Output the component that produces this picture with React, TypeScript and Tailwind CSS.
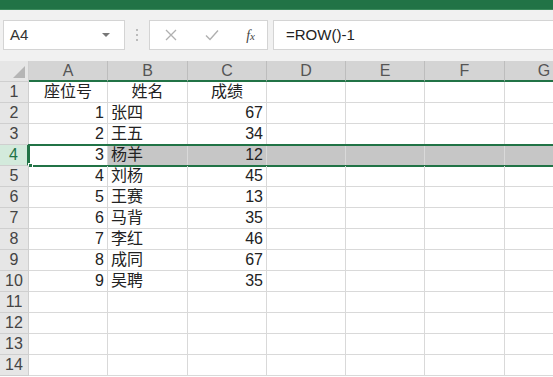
import React from "react";

const cols = ["A", "B", "C", "D", "E", "F", "G"];
const colW = ["w-[79px]", "w-[80px]", "w-[79px]", "w-[79px]", "w-[79px]", "w-[80px]", "w-[79px]"];

const data: [string, string, string][] = [
  ["1", "张四", "67"],
  ["2", "王五", "34"],
  ["3", "杨羊", "12"],
  ["4", "刘杨", "45"],
  ["5", "王赛", "13"],
  ["6", "马背", "35"],
  ["7", "李红", "46"],
  ["8", "成同", "67"],
  ["9", "吴聘", "35"],
];

const font = "font-['Liberation_Sans','Noto_Sans_CJK_SC',sans-serif]";

function Cell({ i, children, className = "" }: { i: number; children?: React.ReactNode; className?: string }) {
  return (
    <div
      className={`${colW[i]} shrink-0 h-full border-r border-b border-[#d9d9d9] flex items-end pb-[1px] px-[3px] text-[16px] leading-[18px] text-[#222] ${className}`}
    >
      {children}
    </div>
  );
}

export default function App() {
  return (
    <div className={`w-[553px] h-[377px] overflow-hidden bg-white ${font}`}>
      {/* 标题栏 */}
      <div className="h-[9px] bg-[#217346]" />
      {/* 编辑栏 */}
      <div className="h-[52px] bg-[#f1f1f1] border-t border-[#3b8a5c] flex items-center pl-[3px] pb-[1px]">
        <div className="w-[122px] h-[30px] bg-white border border-[#d4d4d4] flex items-center justify-between pl-[6px] pr-[14px]">
          <span className="text-[15px] text-[#333]">A4</span>
          <span className="w-0 h-0 border-l-[4px] border-r-[4px] border-t-[4px] border-l-transparent border-r-transparent border-t-[#777]" />
        </div>
        <div className="w-[24px] flex flex-col items-center gap-[3px]">
          <span className="w-[2px] h-[2px] bg-[#bbb]" />
          <span className="w-[2px] h-[2px] bg-[#bbb]" />
          <span className="w-[2px] h-[2px] bg-[#bbb]" />
        </div>
        <div className="w-[119px] h-[30px] bg-white border border-[#d4d4d4] flex items-center pl-[15px] pr-[12px] justify-between">
          <svg width="12" height="12" viewBox="0 0 12 12">
            <path d="M1 1L11 11M11 1L1 11" stroke="#b0b0b0" strokeWidth="1.3" />
          </svg>
          <svg width="14" height="12" viewBox="0 0 14 12">
            <path d="M1 6.5L5 10.5L13 1.5" stroke="#b0b0b0" strokeWidth="1.4" fill="none" />
          </svg>
          <span className="text-[14px] italic text-[#444] font-['Liberation_Serif',serif]">
            f<span className="text-[11px]">x</span>
          </span>
        </div>
        <div className="flex-1 ml-[5px] h-[30px] bg-white border border-[#d4d4d4] border-r-0 flex items-center pl-[12px]">
          <span className="text-[15px] text-[#222]">=ROW()-1</span>
        </div>
      </div>

      {/* 表格 */}
      <div className="relative">
        {/* 列标 */}
        <div className="flex h-[21px]">
          <div className="w-[29px] shrink-0 bg-[#e6e6e6] border-r border-b border-[#cfcfcf] flex items-end justify-end p-[3px]">
            <svg width="12" height="12" viewBox="0 0 12 12">
              <path d="M12 0L12 12L0 12Z" fill="#b5b5b5" />
            </svg>
          </div>
          {cols.map((c, i) => (
            <div
              key={c}
              className={`${colW[i]} shrink-0 bg-[#d4d4d4] border-r border-[#bdbdbd] border-b-2 border-b-[#217346] flex items-center justify-center text-[16px] leading-none text-[#555]`}
            >
              {c}
            </div>
          ))}
        </div>

        {/* 行 */}
        {Array.from({ length: 14 }).map((_, r) => {
          const rowNum = r + 1;
          const sel = rowNum === 4;
          const d = rowNum >= 2 && rowNum <= 10 ? data[rowNum - 2] : null;
          return (
            <div key={rowNum} className="flex h-[21px] relative">
              <div
                className={`w-[29px] shrink-0 border-b border-[#cfcfcf] flex items-end justify-center pb-[1px] text-[16px] leading-[18px] ${
                  sel ? "bg-[#d3eadc] text-[#217346] border-r-2 border-r-[#217346]" : "bg-[#e6e6e6] text-[#444] border-r border-r-[#cfcfcf]"
                }`}
              >
                {rowNum}
              </div>
              {rowNum === 1 ? (
                <>
                  <Cell i={0} className="justify-center">座位号</Cell>
                  <Cell i={1} className="justify-center">姓名</Cell>
                  <Cell i={2} className="justify-center">成绩</Cell>
                </>
              ) : d ? (
                <>
                  <Cell i={0} className="justify-end">{d[0]}</Cell>
                  <Cell i={1} className={sel ? "bg-[#c6c6c6]" : ""}>{d[1]}</Cell>
                  <Cell i={2} className={`justify-end ${sel ? "bg-[#c6c6c6]" : ""}`}>{d[2]}</Cell>
                </>
              ) : (
                <>
                  <Cell i={0} />
                  <Cell i={1} />
                  <Cell i={2} />
                </>
              )}
              {[3, 4, 5, 6].map((i) => (
                <Cell key={i} i={i} className={sel ? "bg-[#c6c6c6]" : ""} />
              ))}
              {sel && (
                <div className="absolute left-[28px] -right-[10px] -top-[1px] h-[23px] border-2 border-[#217346] pointer-events-none">
                  <span className="absolute -left-[2px] -bottom-[3px] w-[5px] h-[5px] bg-[#217346] border border-white" />
                </div>
              )}
            </div>
          );
        })}
      </div>
    </div>
  );
}
